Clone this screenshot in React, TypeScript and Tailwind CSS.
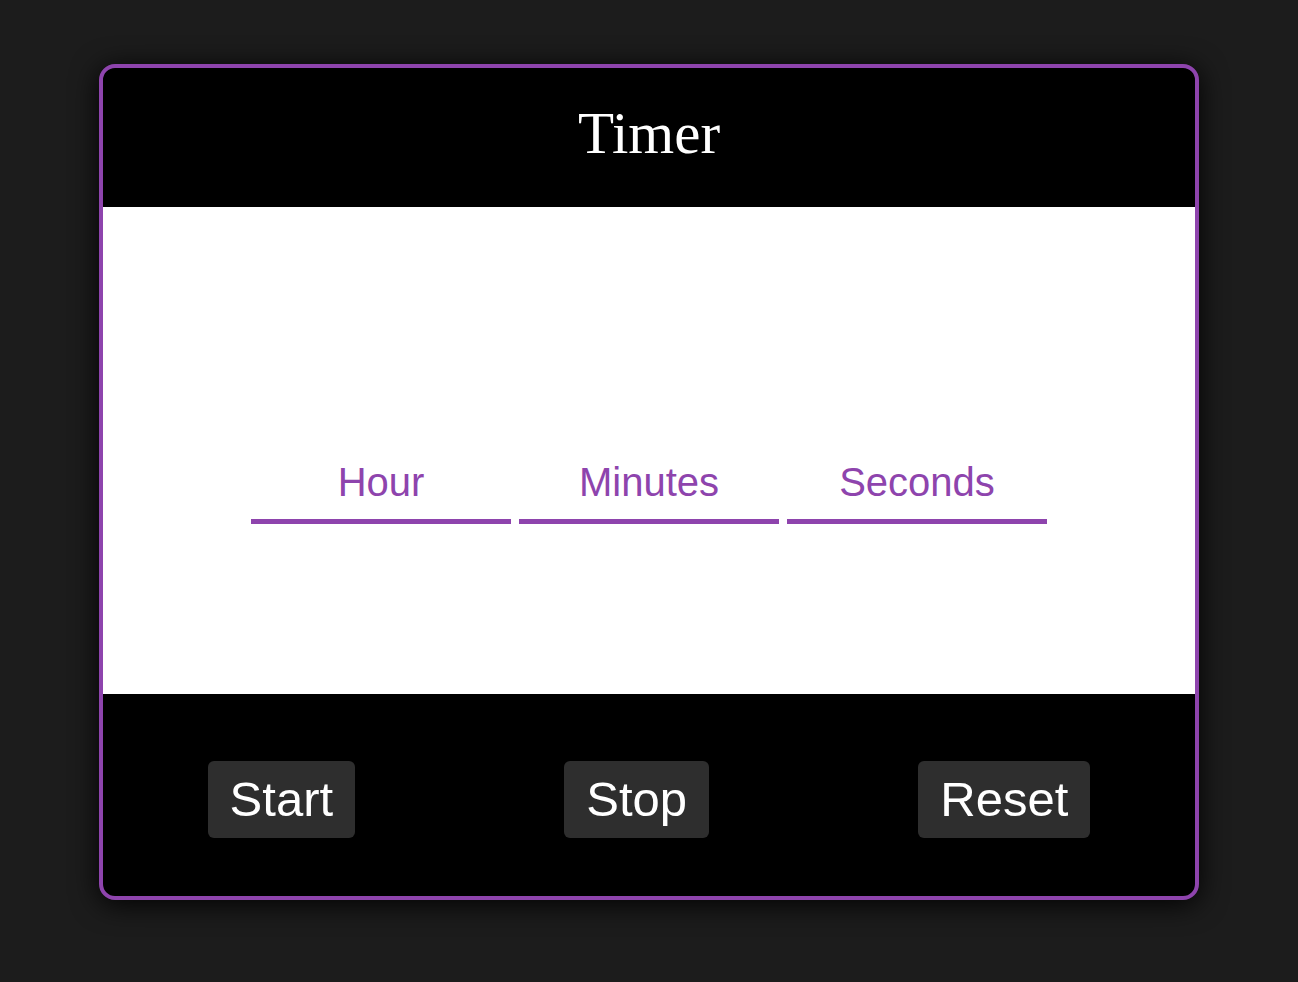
import React from 'react';

const fields = ['Hour', 'Minutes', 'Seconds'];
const actions = ['Start', 'Stop', 'Reset'];

export default function App() {
  return (
    <div className="min-h-[982px] w-full bg-[#1c1c1c] pt-[64px]">
      <div className="mx-auto w-[1100px] overflow-hidden rounded-[16px] border-[4px] border-[#8e44ad] bg-black shadow-[0_4px_28px_rgba(0,0,0,0.95)]">
        {/* header */}
        <div className="h-[139px] pt-[32px] text-center">
          <h1 className="text-[59px] leading-[1.15] text-white font-['Liberation_Serif',serif]">Timer</h1>
        </div>

        {/* time fields */}
        <div className="h-[487px] bg-white pt-[252px]">
          <div className="flex justify-center gap-[8px]">
            {fields.map((f) => (
              <div
                key={f}
                className="w-[260px] border-b-[5px] border-[#8e44ad] pb-[14px] text-center text-[40px] leading-[46px] text-[#8e44ad] font-['Liberation_Sans',Arial,sans-serif]"
              >
                {f}
              </div>
            ))}
          </div>
        </div>

        {/* controls */}
        <div className="flex h-[202px] justify-around pt-[67px]">
          {actions.map((a) => (
            <button
              key={a}
              className="h-[77px] rounded-[6px] bg-[#2e2e2e] px-[22px] text-[49px] leading-[55px] text-white font-['Liberation_Sans',Arial,sans-serif]"
            >
              {a}
            </button>
          ))}
        </div>
      </div>
    </div>
  );
}
